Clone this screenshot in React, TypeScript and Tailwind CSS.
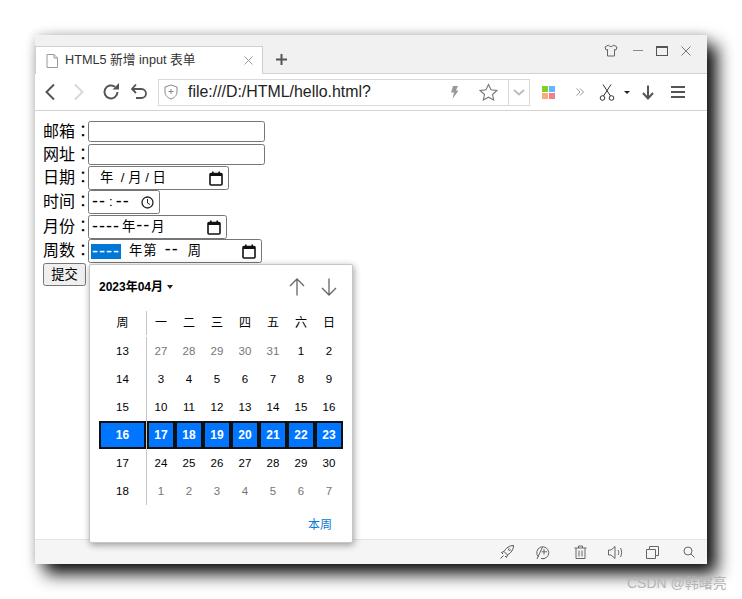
import React from "react";

const weeks: [number, number[], boolean[]][] = [
  [13, [27, 28, 29, 30, 31, 1, 2], [true, true, true, true, true, false, false]],
  [14, [3, 4, 5, 6, 7, 8, 9], [false, false, false, false, false, false, false]],
  [15, [10, 11, 12, 13, 14, 15, 16], [false, false, false, false, false, false, false]],
  [16, [17, 18, 19, 20, 21, 22, 23], [false, false, false, false, false, false, false]],
  [17, [24, 25, 26, 27, 28, 29, 30], [false, false, false, false, false, false, false]],
  [18, [1, 2, 3, 4, 5, 6, 7], [true, true, true, true, true, true, true]],
];

function CalIcon() {
  return (
    <svg width="14" height="15" viewBox="0 0 14 15" className="shrink-0">
      <rect x="1" y="2.500" width="12" height="11.500" rx="1" fill="none" stroke="#111" strokeWidth="1.600" />
      <rect x="1" y="2" width="12" height="3" fill="#111" />
      <rect x="3" y="0.500" width="1.600" height="3" fill="#111" />
      <rect x="9.400" y="0.500" width="1.600" height="3" fill="#111" />
    </svg>
  );
}

function Dash({ children }: { children: string }) {
  return <span className="text-[18px] leading-[15px] tracking-[1px] font-['Liberation_Sans']">{children}</span>;
}

function Row({ label, children, h }: { label: string; children: React.ReactNode; h: string }) {
  return (
    <div className={`flex items-center ${h}`}>
      <span className="w-[45px] text-[16px] leading-none text-black whitespace-nowrap pb-[2px]">
        {label}
        <span className="font-['Noto_Sans_CJK_TC'] inline-block w-[12px] text-center">：</span>
      </span>
      {children}
    </div>
  );
}

const box = "border border-[#767676] rounded-[2.5px] bg-white box-border flex items-center text-[13.33px] text-black";

export default function App() {
  return (
    <div className="relative w-[742px] h-[599px] bg-white overflow-hidden pl-[35px] pt-[35px] font-['Liberation_Sans','Noto_Sans_CJK_SC',sans-serif]">
      <div className="relative w-[672px] h-[529px] bg-white flex flex-col shadow-[10px_10px_16px_rgba(0,0,0,0.95),0_0_10px_rgba(0,0,0,0.18)]">
        {/* title bar */}
        <div className="h-[38px] bg-[#f1f1f1] flex items-end shrink-0 relative">
          <div className="w-[228px] h-[28px] bg-white border-t border-r border-l border-[#cfcfcf] flex items-center pl-[10px] -mb-px">
            <svg width="12" height="14" viewBox="0 0 12 14">
              <path d="M1 .5H8L11.500 4V13.500H1Z M8 .5V4H11.500" fill="none" stroke="#9a9a9a" />
            </svg>
            <span className="ml-[7px] text-[12.7px] text-[#333] whitespace-nowrap">HTML5 新增 input 表单</span>
            <svg width="9" height="9" viewBox="0 0 9 9" className="ml-[49px] shrink-0">
              <path d="M.5.5L8.500 8.500M8.500.5L.5 8.500" stroke="#9a9a9a" strokeWidth="1" />
            </svg>
          </div>
          <svg width="11" height="11" viewBox="0 0 11 11" className="ml-[13px] mb-[8px]">
            <path d="M5.500 0V11M0 5.500H11" stroke="#555" strokeWidth="2" />
          </svg>
          <div className="flex-1" />
          <div className="flex items-center self-start mt-[9px] pr-[16px]">
            <svg width="14" height="13" viewBox="0 0 14 13">
              <path d="M4.500 1L1 3L2 6L3.500 5.500V12H10.500V5.500L12 6L13 3L9.500 1C9 3 5 3 4.500 1Z" fill="none" stroke="#666" strokeWidth="1" />
            </svg>
            <div className="w-[10px] h-px bg-[#888] ml-[15px]" />
            <div className="w-[12px] h-[10px] border border-[#555] border-t-2 ml-[13px]" />
            <svg width="10" height="10" viewBox="0 0 10 10" className="ml-[13px]">
              <path d="M.5.5L9.500 9.500M9.500.5L.5 9.500" stroke="#777" strokeWidth="1" />
            </svg>
          </div>
        </div>
        {/* toolbar */}
        <div className="h-[38px] bg-white border-t border-b border-[#d2d2d2] flex items-center shrink-0 relative">
          <div className="absolute left-px -top-px w-[226px] h-px bg-white" />
          <svg width="12" height="18" viewBox="0 0 12 18" className="ml-[9px]">
            <path d="M10 1.500L2.500 9L10 16.500" fill="none" stroke="#555" strokeWidth="2" />
          </svg>
          <svg width="12" height="18" viewBox="0 0 12 18" className="ml-[17px]">
            <path d="M2 1.500L9.500 9L2 16.500" fill="none" stroke="#d8d8d8" strokeWidth="2" />
          </svg>
          <svg width="18" height="18" viewBox="0 0 18 18" className="ml-[17px]">
            <path d="M15.500 9A6.500 6.500 0 1 1 13 3.800" fill="none" stroke="#555" strokeWidth="2" />
            <path d="M10.500 6.500H17V0Z" fill="#555" />
          </svg>
          <svg width="16" height="16" viewBox="0 0 16 16" className="ml-[11px]">
            <path d="M1.500 5H10.500A4 4 0 0 1 10.500 14H5" fill="none" stroke="#555" strokeWidth="1.800" />
            <path d="M5 .5L1 5L5 9" fill="none" stroke="#555" strokeWidth="1.800" />
          </svg>
          <div className="ml-[11px] w-[372px] h-[27px] border border-[#d9d9d9] flex items-center shrink-0">
            <svg width="14" height="16" viewBox="0 0 14 16" className="ml-[5px]">
              <path d="M7 1L13 3V8C13 11.500 10 14 7 15C4 14 1 11.500 1 8V3Z" fill="none" stroke="#888" />
              <path d="M7 5V10M4.500 7.500H9.500" stroke="#888" />
            </svg>
            <span className="ml-[10px] text-[15.9px] text-[#222] whitespace-nowrap">file:///D:/HTML/hello.html?</span>
            <div className="flex-1" />
            <svg width="9" height="13" viewBox="0 0 9 13" className="mr-[20px]">
              <path d="M3 0H8L6 4.500H8.500L2.500 13L4 6.500H1Z" fill="#999" />
            </svg>
            <svg width="19" height="18" viewBox="0 0 19 18" className="mr-[10px]">
              <path d="M9.500 1.500L12 6.800L17.800 7.500L13.500 11.500L14.700 17L9.500 14.200L4.300 17L5.500 11.500L1.200 7.500L7 6.800Z" fill="none" stroke="#777" strokeWidth="1.100" />
            </svg>
            <div className="w-[21px] h-full border-l border-[#d9d9d9] flex items-center justify-center">
              <svg width="12" height="7" viewBox="0 0 12 7">
                <path d="M1 1L6 5.500L11 1" fill="none" stroke="#bbb" strokeWidth="1.800" />
              </svg>
            </div>
          </div>
          <div className="ml-[12px] grid grid-cols-2 gap-px w-[13px] h-[13px]">
            <div className="bg-[#7ed321]" />
            <div className="bg-[#5cb8ff]" />
            <div className="bg-[#ffa878]" />
            <div className="bg-[#f28088]" />
          </div>
          <svg width="8" height="8" viewBox="0 0 8 8" className="ml-[21px]">
            <path d="M.5.5L4 4L.5 7.500M4 .5L7.500 4L4 7.500" fill="none" stroke="#999" strokeWidth="1" />
          </svg>
          <svg width="16" height="17" viewBox="0 0 16 17" className="ml-[15px]">
            <circle cx="3.500" cy="14" r="2.300" fill="none" stroke="#333" />
            <circle cx="12.500" cy="14" r="2.300" fill="none" stroke="#333" />
            <path d="M4.500 12L12 .5M11.500 12L4 .5" stroke="#333" strokeWidth="1" />
          </svg>
          <div className="ml-[9px] w-0 h-0 border-x-[3px] border-x-transparent border-t-[3px] border-t-[#222]" />
          <svg width="14" height="15" viewBox="0 0 14 15" className="ml-[11px]">
            <path d="M7 .5V13M2 8L7 13.500L12 8" fill="none" stroke="#555" strokeWidth="2" />
          </svg>
          <div className="ml-[16px] w-[14px] flex flex-col gap-[3px]">
            <div className="h-[2px] bg-[#555]" />
            <div className="h-[2px] bg-[#555]" />
            <div className="h-[2px] bg-[#555]" />
          </div>
        </div>
        {/* page content */}
        <div className="flex-1 bg-white pl-[8px] pt-[10px] flex flex-col items-start">
          <Row label="邮箱" h="h-[23px] -mt-[1px]">
            <div className={`${box} w-[177px] h-[21px]`} />
          </Row>
          <Row label="网址" h="h-[23px]">
            <div className={`${box} w-[177px] h-[21px]`} />
          </Row>
          <Row label="日期" h="h-[24px]">
            <div className={`${box} w-[141px] h-[24px] pl-[11px] pr-[5px] justify-between`}>
              <span className="whitespace-pre">年  / 月 / 日</span>
              <CalIcon />
            </div>
          </Row>
          <Row label="时间" h="h-[24px]">
            <div className={`${box} w-[72px] h-[24px] pl-[3px] pr-[5px] justify-between`}>
              <span className="flex items-center gap-[3px]"><Dash>--</Dash><span>:</span><Dash>--</Dash></span>
              <svg width="13" height="13" viewBox="0 0 13 13">
                <circle cx="6.500" cy="6.500" r="5.500" fill="none" stroke="#222" strokeWidth="1.300" />
                <path d="M6.500 3V7L9 8.500" fill="none" stroke="#222" />
              </svg>
            </div>
          </Row>
          <Row label="月份" h="h-[25px] pt-px">
            <div className={`${box} w-[139px] h-[24px] pl-[3px] pr-[5px] justify-between`}>
              <span className="flex items-center"><Dash>----</Dash><span className="ml-[2px]">年</span><span className="ml-[1px]"><Dash>--</Dash></span><span className="ml-[1px]">月</span></span>
              <CalIcon />
            </div>
          </Row>
          <Row label="周数" h="h-[24px]">
            <div className={`${box} w-[174px] h-[24px] pl-[2px] pr-[5px]`}>
              <span className="bg-[#0078d7] text-white w-[30px] h-[15px] flex items-center justify-center"><Dash>----</Dash></span>
              <span className="flex items-center ml-[8px]">
                <span>年</span>
                <span className="ml-[1px]">第</span>
                <span className="ml-[8px]"><Dash>--</Dash></span>
                <span className="ml-[9px]">周</span>
              </span>
              <div className="flex-1" />
              <CalIcon />
            </div>
          </Row>
          <button className="mt-0 w-[43px] h-[23px] bg-[#efefef] border border-[#767676] rounded-[2.5px] text-[13.33px] text-black flex items-center justify-center">
            提交
          </button>
        </div>
        {/* status bar */}
        <div className="h-[25px] bg-[#f5f5f5] border-t border-[#e4e4e4] flex items-center justify-end pr-[12px] shrink-0">
          <svg width="14" height="14" viewBox="0 0 14 14">
            <path d="M13.500.5C9.500.5 6 3 4 6.500L7.500 10C11 8 13.500 4.500 13.500.5ZM4 6.500L1.500 7.500L3 9M7.500 10L6.500 12.500L5 11M3.500 10.500L.5 13.500M9.500 3.500A1 1 0 1 0 10.500 4.500" fill="none" stroke="#555" />
          </svg>
          <svg width="14" height="15" viewBox="0 0 14 15" className="ml-[22px]">
            <path d="M2.500 12A6 6 0 1 1 5 13.500H9" fill="none" stroke="#666" />
            <path d="M8 4V9.500M5.500 6.800H11M1 14L6.500 2" stroke="#666" fill="none" />
          </svg>
          <svg width="13" height="14" viewBox="0 0 13 14" className="ml-[24px]">
            <path d="M.5 3H12.500M2 3V13.500H11V3M4.500 3V1H8.500V3M5 5.500V11.500M8 5.500V11.500" fill="none" stroke="#666" />
          </svg>
          <svg width="15" height="13" viewBox="0 0 15 13" className="ml-[21px]">
            <path d="M7 .5L3 4H.5V9H3L7 12.500ZM10 4C11 5.500 11 7.500 10 9M12.500 2C14 4.500 14 8.500 12.500 11" fill="none" stroke="#666" />
          </svg>
          <svg width="13" height="13" viewBox="0 0 13 13" className="ml-[23px]">
            <path d="M.5 3.500H9.500V12.500H.5ZM3.500 3.500V.5H12.500V9.500H9.500" fill="none" stroke="#666" />
          </svg>
          <svg width="12" height="12" viewBox="0 0 12 12" className="ml-[24px]">
            <circle cx="5" cy="5" r="4" fill="none" stroke="#666" />
            <path d="M8 8L11.500 11.500" stroke="#666" />
          </svg>
        </div>
        {/* calendar popup */}
        <div className="absolute left-[54px] top-[229px] w-[264px] h-[279px] bg-white border border-[#c6c6c6] rounded-[2px] shadow-[1px_2px_7px_rgba(0,0,0,0.38)] pl-[9px] pr-[9px] flex flex-col">
          <div className="h-[44px] flex items-center shrink-0">
            <span className="text-[12px] font-bold text-black whitespace-nowrap">2023年04月</span>
            <div className="ml-[4px] w-0 h-0 border-x-[3.5px] border-x-transparent border-t-[4px] border-t-[#222]" />
            <div className="flex-1" />
            <svg width="16" height="18" viewBox="0 0 16 18">
              <path d="M8 17.500V1M1 8L8 1L15 8" fill="none" stroke="#666" strokeWidth="1.300" />
            </svg>
            <svg width="16" height="18" viewBox="0 0 16 18" className="ml-[16px] mr-[6px]">
              <path d="M8 .5V17M1 10L8 17L15 10" fill="none" stroke="#666" strokeWidth="1.300" />
            </svg>
          </div>
          <div className="flex h-[28px] items-center text-[12px] text-black shrink-0">
            <div className="w-[47px] text-center">周</div>
            <div className="w-px h-[24px] bg-[#c4c4c4]" />
            <div className="flex">
              {["一", "二", "三", "四", "五", "六", "日"].map((d) => (
                <div key={d} className="w-[28px] text-center">{d}</div>
              ))}
            </div>
          </div>
          {weeks.map(([w, days, dim]) =>
            w === 16 ? (
              <div key={w} className="flex h-[28px] text-[12px] font-bold text-white shrink-0">
                <div className="w-[47px] h-full bg-[#0075ff] border-2 border-[#111] flex items-center justify-center box-border">{w}</div>
                <div className="w-px bg-[#c4c4c4]" />
                <div className="flex">
                  {days.map((d) => (
                    <div key={d} className="w-[28px] h-full bg-[#0075ff] border-2 border-[#111] flex items-center justify-center box-border">{d}</div>
                  ))}
                </div>
              </div>
            ) : (
              <div key={w} className="flex h-[28px] text-[11.5px] text-black items-center shrink-0">
                <div className="w-[47px] text-center mt-[2px]">{w}</div>
                <div className="w-px h-full bg-[#c4c4c4]" />
                <div className="flex mt-[2px]">
                  {days.map((d, i) => (
                    <div key={i} className={`w-[28px] text-center ${dim[i] ? "text-[#767676]" : "text-black"}`}>{d}</div>
                  ))}
                </div>
              </div>
            )
          )}
          <div className="flex-1 flex items-center justify-end pr-[11px] pt-[2px]">
            <span className="text-[12px] text-[#0a7cd4]">本周</span>
          </div>
        </div>
      </div>
      <div className="absolute left-[627px] top-[576px] text-[14px] leading-none text-[#b4b4b4] whitespace-nowrap">CSDN @韩曙亮</div>
    </div>
  );
}
